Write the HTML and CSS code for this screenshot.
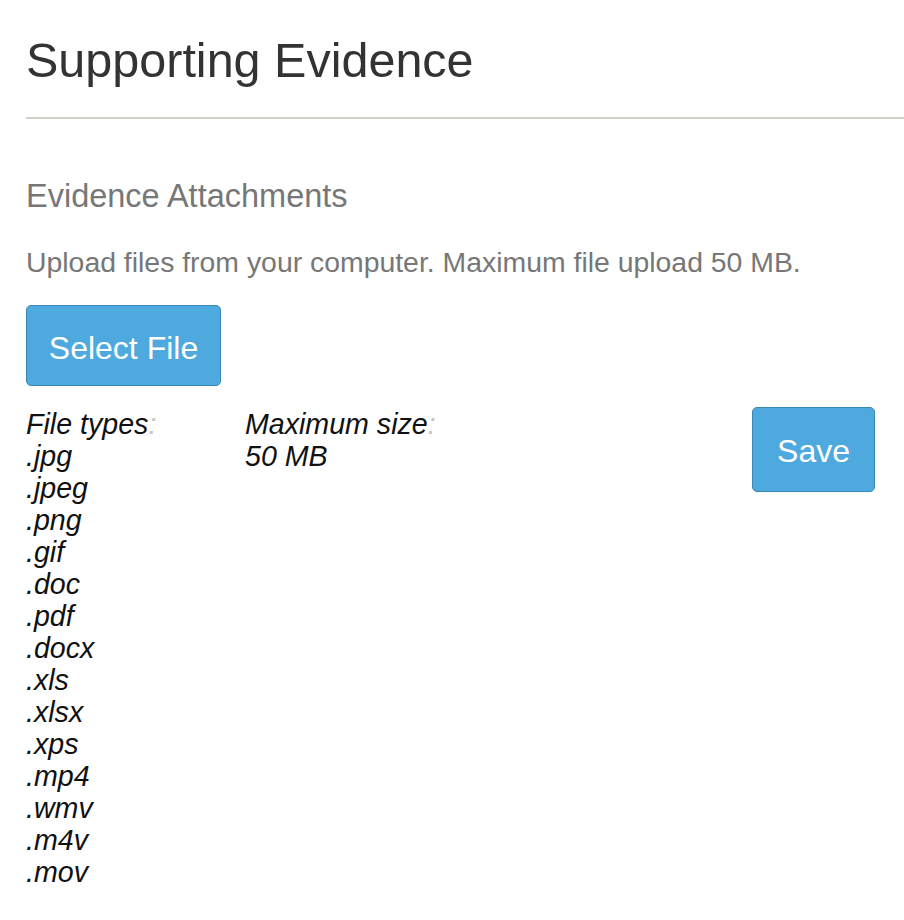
FILE: index.html
```html
<!DOCTYPE html>
<html lang="en">
<head>
<meta charset="utf-8">
<title>Supporting Evidence</title>
<link rel="stylesheet" href="styles.css">
</head>
<body>
<main class="page">
  <h1 class="title">Supporting Evidence</h1>
  <hr class="rule">
  <h2 class="subtitle">Evidence Attachments</h2>
  <p class="hint">Upload files from your computer. Maximum file upload 50 MB.</p>
  <button class="btn btn-select" type="button">Select File</button>
  <div class="details">
    <dl class="info info-types">
      <dt class="label">File types</dt>
      <dd>.jpg</dd>
      <dd>.jpeg</dd>
      <dd>.png</dd>
      <dd>.gif</dd>
      <dd>.doc</dd>
      <dd>.pdf</dd>
      <dd>.docx</dd>
      <dd>.xls</dd>
      <dd>.xlsx</dd>
      <dd>.xps</dd>
      <dd>.mp4</dd>
      <dd>.wmv</dd>
      <dd>.m4v</dd>
      <dd>.mov</dd>
    </dl>
    <dl class="info info-size">
      <dt class="label">Maximum size</dt>
      <dd>50 MB</dd>
    </dl>
    <button class="btn btn-save" type="button">Save</button>
  </div>
</main>
</body>
</html>
```
FILE: styles.css
```css
html, body {
  margin: 0;
  padding: 0;
  background: #ffffff;
}

body {
  font-family: "Liberation Sans", Arial, Helvetica, sans-serif;
  color: #333333;
}

.page {
  padding: 34px 0 0 26px;
}

.title {
  margin: 0;
  font-size: 48.5px;
  line-height: 53px;
  font-weight: normal;
  color: #333333;
}

.rule {
  margin: 30px 0 0 0;
  border: 0;
  border-top: 2px solid #d0d0c6;
  height: 0;
}

.subtitle {
  margin: 59px 0 0 0;
  font-size: 32.5px;
  line-height: 36px;
  font-weight: normal;
  color: #777777;
}

.hint {
  margin: 32px 0 0 0;
  font-size: 28.4px;
  line-height: 32px;
  color: #777777;
}

.btn {
  display: block;
  font-family: "Liberation Sans", Arial, Helvetica, sans-serif;
  font-size: 32px;
  color: #ffffff;
  background: #4ea9de;
  border: 1px solid #3b87b5;
  border-radius: 5px;
  cursor: pointer;
}

.btn-select {
  margin-top: 27px;
  width: 195px;
  height: 81px;
  padding: 5px 0 0 0;
}

.details {
  display: flex;
  align-items: flex-start;
  margin-top: 22px;
}

.info {
  margin: 0;
  font-size: 28.6px;
  line-height: 32px;
  font-style: italic;
  color: #111111;
}

.info dd {
  margin: 0;
}

.label::after {
  content: ":";
  color: #c4c4c4;
}

.info-types {
  width: 219px;
}

.info-size {
  flex: 1;
}

.btn-save {
  margin: -1px 29px 0 0;
  width: 123px;
  height: 85px;
  padding: 4px 0 0 0;
}
```
